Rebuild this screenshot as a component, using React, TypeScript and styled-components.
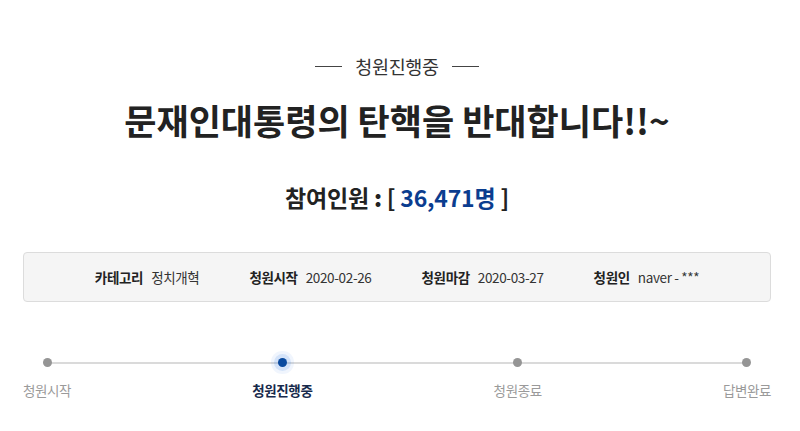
import React from 'react';
import styled, { createGlobalStyle } from 'styled-components';

const GlobalStyle = createGlobalStyle`
    html, body {
        margin: 0;
        padding: 0;
        background: #ffffff;
    }
    body {
        font-family: "Noto Sans CJK KR", "Noto Sans", sans-serif;
        color: #222;
    }
`;

interface InfoItem {
    label: string;
    value: string;
}

interface Step {
    label: string;
    active?: boolean;
}

const infoItems: InfoItem[] = [
    { label: '카테고리', value: '정치개혁' },
    { label: '청원시작', value: '2020-02-26' },
    { label: '청원마감', value: '2020-03-27' },
    { label: '청원인', value: 'naver - ***' },
];

const steps: Step[] = [
    { label: '청원시작' },
    { label: '청원진행중', active: true },
    { label: '청원종료' },
    { label: '답변완료' },
];

export const App: React.FC = (): React.ReactElement => {
    return (
        <Page>
            <GlobalStyle />
            <StatusLabel>청원진행중</StatusLabel>
            <Title>문재인대통령의 탄핵을 반대합니다!!~</Title>
            <Count>
                참여인원 <Colon>:</Colon> [ <CountNumber>36,471명</CountNumber> ]
            </Count>
            <InfoBox>
                {infoItems.map((item) => (
                    <InfoEntry key={item.label}>
                        <InfoLabel>{item.label}</InfoLabel>
                        <InfoValue>{item.value}</InfoValue>
                    </InfoEntry>
                ))}
            </InfoBox>
            <Progress>
                {steps.map((step) => (
                    <StepItem key={step.label}>
                        <Dot active={step.active} />
                        <StepLabel active={step.active}>{step.label}</StepLabel>
                    </StepItem>
                ))}
            </Progress>
        </Page>
    );
};

const Page = styled.div`
    width: 748px;
    margin: 0 0 0 23px;
    padding-top: 53px;
    display: flex;
    flex-direction: column;
    align-items: center;
`;

const StatusLabel = styled.div`
    display: flex;
    align-items: center;
    gap: 13px;
    font-size: 18.5px;
    line-height: 26px;
    color: #333;
    letter-spacing: -0.3px;

    &::before,
    &::after {
        content: '';
        width: 27px;
        height: 1px;
        background: #444;
    }
`;

const Title = styled.h1`
    margin: 18px 0 0 0;
    font-size: 35px;
    line-height: 46px;
    font-weight: 700;
    color: #222;
    letter-spacing: 0;
`;

const Count = styled.div`
    margin-top: 38px;
    font-size: 23px;
    line-height: 32px;
    font-weight: 700;
    color: #222;
    letter-spacing: -0.2px;
`;

const Colon = styled.span`
    font-weight: 900;
`;

const CountNumber = styled.span`
    color: #0b3d8f;
`;

const InfoBox = styled.div`
    margin-top: 39px;
    width: 100%;
    height: 50px;
    box-sizing: border-box;
    border: 1px solid #dcdcdc;
    border-radius: 4px;
    background: #f5f5f5;
    display: flex;
    justify-content: center;
    align-items: center;
    gap: 50px;
`;

const InfoEntry = styled.div`
    display: flex;
    align-items: center;
    gap: 8px;
    font-size: 13.5px;
    letter-spacing: -0.35px;
    color: #333;
`;

const InfoLabel = styled.span`
    font-weight: 700;
    color: #222;
`;

const InfoValue = styled.span`
    font-weight: 400;
`;

const Progress = styled.div`
    position: relative;
    margin-top: 54px;
    width: 100%;
    display: flex;
    justify-content: space-between;

    &::before {
        content: '';
        position: absolute;
        top: 6px;
        left: 25px;
        right: 25px;
        height: 2px;
        background: #dadada;
    }
`;

const StepItem = styled.div`
    position: relative;
    display: flex;
    flex-direction: column;
    align-items: center;
    gap: 14px;
`;

const Dot = styled.span<{ active?: boolean }>`
    width: 9px;
    height: 9px;
    margin-top: 2px;
    border-radius: 50%;
    background: ${(p) => (p.active ? '#0a4a9f' : '#959595')};
    box-shadow: ${(p) =>
        p.active
            ? '0 0 0 4px rgba(40, 120, 230, 0.14), 0 0 0 7px rgba(40, 120, 230, 0.07)'
            : 'none'};
`;

const StepLabel = styled.span<{ active?: boolean }>`
    font-size: 13.5px;
    line-height: 18px;
    letter-spacing: -0.4px;
    font-weight: ${(p) => (p.active ? 700 : 400)};
    color: ${(p) => (p.active ? '#172a4c' : '#9a9a9a')};
`;

export default App;
